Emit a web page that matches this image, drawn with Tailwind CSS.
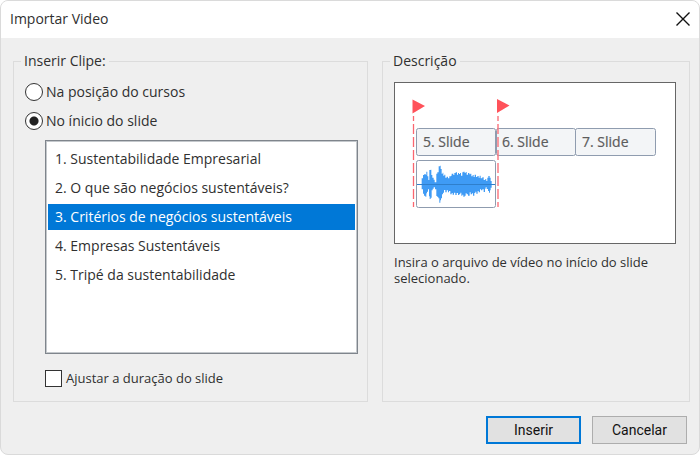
<!DOCTYPE html>
<html lang="pt-BR">
<head>
<meta charset="utf-8">
<meta name="viewport" content="width=device-width, initial-scale=1">
<title>Importar Video</title>
<script src="https://cdn.jsdelivr.net/npm/@tailwindcss/browser@4"></script>
</head>
<body class="flex min-h-screen flex-col bg-white font-['Open_Sans',sans-serif] text-sm text-[#303030]">
<main role="dialog" aria-labelledby="title" class="flex grow flex-col overflow-hidden rounded-lg border border-[#dadada] bg-[#efefef]">
  <header class="flex h-[37px] items-center justify-between bg-white pr-2 pb-0.5 pl-[9px]">
    <h1 id="title">Importar Video</h1>
    <button type="button" aria-label="Fechar" class="flex size-4 items-center justify-center">
      <svg viewBox="0 0 14 14" class="size-[14px]" fill="none" stroke="#111" stroke-width="1.4"><path d="M.5 .5 13.5 13.5M13.5 .5 .5 13.5"/></svg>
    </button>
  </header>

  <form class="flex grow flex-col pt-[13px] pr-[9px] pb-[10px] pl-3">
    <div class="grid grow grid-cols-[355fr_308fr] gap-[14px]">
      <fieldset class="flex min-w-0 flex-col border border-[#dcdcdc] pr-[9px] pl-[11px]">
        <legend class="-ml-1 px-[3px] leading-5">Inserir Clipe:</legend>
        <div class="flex h-full flex-col">
        <label class="mt-[11px] flex h-5 items-center gap-[3px]">
          <input type="radio" name="pos" class="size-[18px] appearance-none rounded-full border-[1.5px] border-[#333] bg-white checked:bg-radial checked:from-[#222] checked:from-[4px] checked:to-white checked:to-[5px]">
          Na posição do cursos
        </label>
        <label class="mt-[9px] flex h-5 items-center gap-[3px]">
          <input type="radio" name="pos" checked class="size-[18px] appearance-none rounded-full border-[1.5px] border-[#333] bg-white checked:bg-radial checked:from-[#222] checked:from-[4px] checked:to-white checked:to-[5px]">
          No ínicio do slide
        </label>
        <select size="5" aria-label="Slide" class="mt-[9px] ml-5 h-[214px] overflow-hidden border border-[#7f858c] bg-white px-0.5 py-[2px] text-sm shadow-[inset_0_0_0_1px_#c4c8cc] outline-none">
          <option class="my-[3px] h-[26px] px-[7px] pt-[3px] pb-0 checked:bg-linear-to-r checked:from-[#0078d7] checked:to-[#0078d7] checked:[-webkit-text-fill-color:#fff]">1. Sustentabilidade Empresarial</option>
          <option class="my-[3px] h-[26px] px-[7px] pt-[3px] pb-0 checked:bg-linear-to-r checked:from-[#0078d7] checked:to-[#0078d7] checked:[-webkit-text-fill-color:#fff]">2. O que são negócios sustentáveis?</option>
          <option selected class="my-[3px] h-[26px] px-[7px] pt-[3px] pb-0 checked:bg-linear-to-r checked:from-[#0078d7] checked:to-[#0078d7] checked:[-webkit-text-fill-color:#fff]">3. Critérios de negócios sustentáveis</option>
          <option class="my-[3px] h-[26px] px-[7px] pt-[3px] pb-0 checked:bg-linear-to-r checked:from-[#0078d7] checked:to-[#0078d7] checked:[-webkit-text-fill-color:#fff]">4. Empresas Sustentáveis</option>
          <option class="my-[3px] h-[26px] px-[7px] pt-[3px] pb-0 checked:bg-linear-to-r checked:from-[#0078d7] checked:to-[#0078d7] checked:[-webkit-text-fill-color:#fff]">5. Tripé da sustentabilidade</option>
        </select>
        <label class="mt-[14px] mb-3 ml-5 flex h-5 items-center gap-1 text-[13px]">
          <input type="checkbox" class="size-[17px] appearance-none border border-[#333] bg-white checked:bg-[#333]">
          Ajustar a duração do slide
        </label>
        </div>
      </fieldset>

      <fieldset class="min-w-0 border border-[#dcdcdc] pr-[13px] pl-[11px]">
        <legend class="-ml-1 px-[3px] leading-5">Descrição</legend>
        <div class="mt-[11px] border border-[#666] bg-white">
          <svg viewBox="0 0 280 160" class="block w-full" role="img" aria-label="Linha do tempo com os slides e o áudio">
            <g fill="#f3f5f7" stroke="#8f9caf">
              <rect x="21.5" y="45.5" width="79" height="27" rx="2"/>
              <rect x="101.5" y="45.5" width="79" height="27" rx="2"/>
              <rect x="180.5" y="45.5" width="80" height="27" rx="2"/>
              <rect x="21.5" y="77.5" width="79" height="47" rx="2" fill="#fff"/>
            </g>
            <g font-family="Open Sans, sans-serif" font-size="14" fill="#5c5c5c" stroke="#5c5c5c" stroke-width=".2">
              <text x="28" y="64">5. Slide</text>
              <text x="107" y="64">6. Slide</text>
              <text x="187" y="64">7. Slide</text>
            </g>
            <path transform="translate(10 72) scale(.3333)" fill="#3f9bf5" d="M50 88V70H54V60H58V57H62V60H64V50H67V64H70V75H73V45H77V44H79V60H82V68H86V74H89V82H94V56H97V52H101V34H105V32H107V42H110V56H113V53H115V62H118V59H121V68H125V65H129V70H133V64H138V62H140V56H145V60H148V54H152V52H156V59H159V54H162V57H165V54H168V62H172V52H175V50H179V54H182V51H185V59H189V54H193V58H196V56H199V64H203V60H206V66H209V59H213V66H217V63H221V68H224V62H227V70H232V67H236V75H240V73H244V78H247V68H250V63H254V68H257V78H260V98H257V106H255V113H252V108H249V102H245V97H242V101H240V111H236V103H232V106H228V103H225V112H221V108H218V116H214V110H211V114H208V122H204V115H201V118H197V112H194V122H189V118H185V115H182V122H179V125H175V119H172V122H169V113H166V117H163V120H159V114H155V120H151V113H147V119H143V114H140V118H136V108H132V112H129V106H125V112H121V105H117V113H114V118H111V130H108V136H106V143H103V130H100V126H97V123H94V103H90V97H86V101H83V106H80V128H77V132H74V124H72V103H69V110H66V115H64V125H61V122H57V116H54V103H50Z"/>
            <path d="M22 101.500h78" stroke="#2f7fcc"/>
            <g fill="none" stroke="#fa6670" stroke-width="1.300" stroke-dasharray="10 3">
              <path d="M18.500 33v91" stroke-dashoffset="5"/>
              <path d="M103 33v91" stroke-dashoffset="5"/>
            </g>
            <path fill="#ff525a" d="M17.500 16.500 30 23 17.500 30.500zM102 16 114.500 22.500 102 30z"/>
          </svg>
        </div>
        <p class="mt-[10px] text-[13px] leading-4">Insira o arquivo de vídeo no início do slide selecionado.</p>
      </fieldset>
    </div>
    <div class="mt-[14px] flex justify-end gap-[11px] pr-[3px] font-['Roboto',sans-serif] text-[#111]">
      <button type="submit" class="h-7 w-[95px] border-2 border-[#0078d7] bg-[#e1e1e1]">Inserir</button>
      <button type="button" class="h-7 w-[95px] border border-[#adadad] bg-[#e1e1e1]">Cancelar</button>
    </div>
  </form>
</main>
</body>
</html>
